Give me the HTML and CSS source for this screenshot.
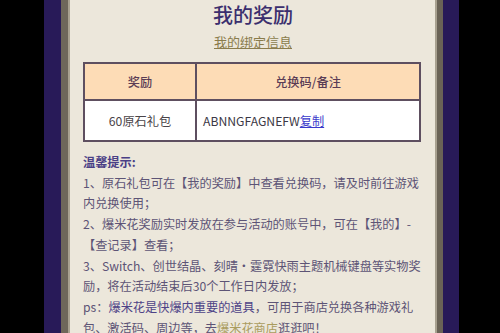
FILE: index.html
```html
<!DOCTYPE html>
<html lang="zh">
<head>
<meta charset="utf-8">
<link rel="stylesheet" href="styles.css">
</head>
<body>
<div class="screen">
  <div class="frame">
    <div class="card">
      <h1 class="title">我的奖励</h1>
      <div class="bind"><a class="bind-link">我的绑定信息</a></div>
      <table class="rewards">
        <thead>
          <tr><th class="c1">奖励</th><th class="c2">兑换码/备注</th></tr>
        </thead>
        <tbody>
          <tr><td class="c1">60原石礼包</td><td class="c2 code">ABNNGFAGNEFW<a class="copy">复制</a></td></tr>
        </tbody>
      </table>
      <div class="tips">
        <div class="tips-title">温馨提示:</div>
        <p>1、原石礼包可在【我的奖励】中查看兑换码，请及时前往游戏<br>内兑换使用；</p>
        <p>2、爆米花奖励实时发放在参与活动的账号中，可在【我的】-<br>【查记录】查看；</p>
        <p>3、Switch、创世结晶、刻晴·霆霓快雨主题机械键盘等实物奖<br>励，将在活动结束后30个工作日内发放；</p>
        <p>ps：<span class="strong">爆米花是快爆内重要的道具</span>，可用于商店兑换各种游戏礼<br>包、激活码、周边等，去<a class="shop">爆米花商店</a>逛逛吧！</p>
      </div>
    </div>
  </div>
</div>
</body>
</html>
```
FILE: styles.css
```css
html, body {
  margin: 0;
  padding: 0;
  background: #000;
  width: 500px;
  height: 333px;
  overflow: hidden;
}
.screen {
  display: flex;
  height: 333px;
  padding-left: 44px;
  font-family: "Noto Sans CJK SC", "Noto Sans", sans-serif;
}
.frame {
  background: #281a58;
  padding: 0 16px 0 17px;
  display: flex;
}
.card {
  background: #ece7db;
  border-left: 7px solid #6e675a;
  border-right: 6px solid #6a6356;
  padding: 0 16px 0 15px;
  box-sizing: border-box;
  width: 382px;
  box-shadow: inset 2px 0 0 #a8a190, inset -2px 0 0 #a8a190;
}
.title {
  margin: 1px 0 0;
  font-size: 20px;
  line-height: 28px;
  font-weight: 500;
  color: #3b2f6e;
  text-align: center;
  padding-left: 2px;
}
.bind {
  margin-top: 3px;
  text-align: center;
  line-height: 20px;
  font-size: 13px;
  padding-left: 2px;
}
.bind-link {
  color: #8a7c4c;
  text-decoration: underline;
}
.rewards {
  margin-top: 10px;
  width: 338px;
  border-collapse: collapse;
  font-size: 12.2px;
  border: 2px solid #7a6e78;
}
.rewards th, .rewards td {
  border: 2px solid #5e4f60;
  text-align: center;
  padding: 0;
}
.rewards th {
  background: #fddcb6;
  height: 35px;
  font-weight: 500;
  color: #5a3c55;
}
.rewards td {
  background: #fff;
  height: 39px;
  color: #4a4448;
}
.rewards .c1 { width: 110px; }
.rewards td.code {
  text-align: left;
  padding-left: 6px;
  color: #3c3846;
}
.copy {
  color: #3a3acb;
  text-decoration: underline;
}
.tips {
  margin-top: 10px;
  font-size: 12.2px;
  line-height: 20.7px;
  color: #5d5476;
}
.tips-title {
  font-weight: 700;
  color: #4a3f86;
}
.tips p {
  margin: 0;
  white-space: nowrap;
}
.strong {
  color: #4e4387;
}
.shop {
  color: #aa9c5e;
  text-decoration: underline;
}
```
